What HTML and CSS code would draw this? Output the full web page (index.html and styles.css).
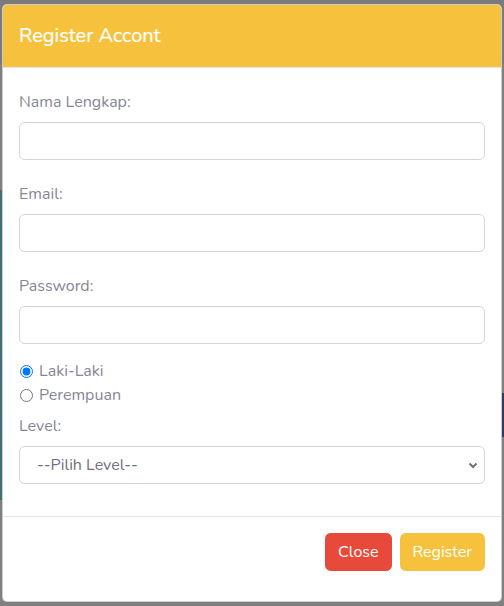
FILE: index.html
```html
<!DOCTYPE html>
<html lang="id">
<head>
<meta charset="utf-8">
<title>Register Accont</title>
<link rel="stylesheet" href="styles.css">
</head>
<body>
<div class="modal-dialog">
  <div class="modal-content">
    <div class="modal-header">
      <h5 class="modal-title">Register Accont</h5>
    </div>
    <form class="modal-body">
      <div class="field">
        <label class="label" for="nama">Nama Lengkap:</label>
        <input class="control" type="text" id="nama">
      </div>
      <div class="field">
        <label class="label" for="email">Email:</label>
        <input class="control" type="email" id="email">
      </div>
      <div class="field field-tight">
        <label class="label" for="password">Password:</label>
        <input class="control" type="password" id="password">
      </div>
      <div class="gender">
        <label class="check"><input class="radio" type="radio" name="jk" checked><span>Laki-Laki</span></label>
        <label class="check"><input class="radio" type="radio" name="jk"><span>Perempuan</span></label>
      </div>
      <div class="field-last">
        <label class="label" for="level">Level:</label>
        <select class="control select" id="level">
          <option>--Pilih Level--</option>
        </select>
      </div>
    </form>
    <div class="modal-footer">
      <button class="btn btn-danger" type="button">Close</button>
      <button class="btn btn-warning" type="button">Register</button>
    </div>
  </div>
</div>
</body>
</html>
```
FILE: styles.css
```css
* { box-sizing: border-box; }

html, body {
  margin: 0;
  height: 100%;
}

body {
  font-family: "Nunito", "Lato", "Open Sans", sans-serif;
  font-size: 16px;
  line-height: 1.5;
  color: #858796;
  background:
    linear-gradient(to bottom, transparent 0, transparent 393px, #2e3b6a 393px, #2e3b6a 437px, transparent 437px) right top / 3px 100% no-repeat,
    linear-gradient(to bottom, transparent 0, transparent 190px, #3f6f78 190px, #3f6f78 500px, transparent 500px) left top / 2px 100% no-repeat,
    linear-gradient(to bottom, #7b7b7b 0, #7b7b7b 63px, #808080 63px);
}

.modal-dialog {
  width: 500px;
  margin: 4px 2px 0 2px;
}

.modal-content {
  background: #fff;
  border: 1px solid rgba(0, 0, 0, 0.2);
  border-radius: 5px;
  overflow: hidden;
}

.modal-header {
  background: #f6c23e;
  padding: 16px 16px;
  border-bottom: 1px solid #e3e6f0;
}

.modal-title {
  margin: 0;
  font-size: 20px;
  line-height: 30px;
  font-weight: 400;
  color: #fff;
  -webkit-text-stroke: 0.2px #fff;
}

.modal-body {
  display: block;
  margin: 0;
  padding: 22px 16px 32px;
}

.field { margin-bottom: 22px; }
.field-tight { margin-bottom: 15px; }

.label {
  display: block;
  margin-bottom: 8px;
  line-height: 24px;
}

.control {
  display: block;
  width: 100%;
  height: 38px;
  padding: 6px 12px;
  font: inherit;
  color: #6e707e;
  background: #fff;
  border: 1px solid #d1d3e2;
  border-radius: 5.6px;
  outline: none;
}

.select {
  appearance: none;
  -webkit-appearance: none;
  padding-left: 17px;
  background-image: url("data:image/svg+xml,%3Csvg xmlns='http://www.w3.org/2000/svg' width='10' height='8' viewBox='0 0 10 8'%3E%3Cpath d='M1.5 2.5 L5 6 L8.5 2.5' fill='none' stroke='%236e707e' stroke-width='2'/%3E%3C/svg%3E");
  background-repeat: no-repeat;
  background-position: right 6px center;
  background-size: 10px 8px;
}

.gender { margin-bottom: 7px; }

.check {
  display: flex;
  align-items: center;
  line-height: 24px;
  padding-left: 20px;
}

.radio {
  width: 13px;
  height: 13px;
  margin: 0 6px 0 -19px;
}

.modal-footer {
  display: flex;
  justify-content: flex-end;
  gap: 8px;
  padding: 16px 16px 30px;
  border-top: 1px solid #e3e6f0;
}

.btn {
  height: 38px;
  padding: 0 12px;
  font: inherit;
  line-height: 24px;
  color: #fff;
  border: 1px solid transparent;
  border-radius: 5.6px;
}

.btn-danger { background: #e74a3b; border-color: #e74a3b; }
.btn-warning { background: #f6c23e; border-color: #f6c23e; }
```
